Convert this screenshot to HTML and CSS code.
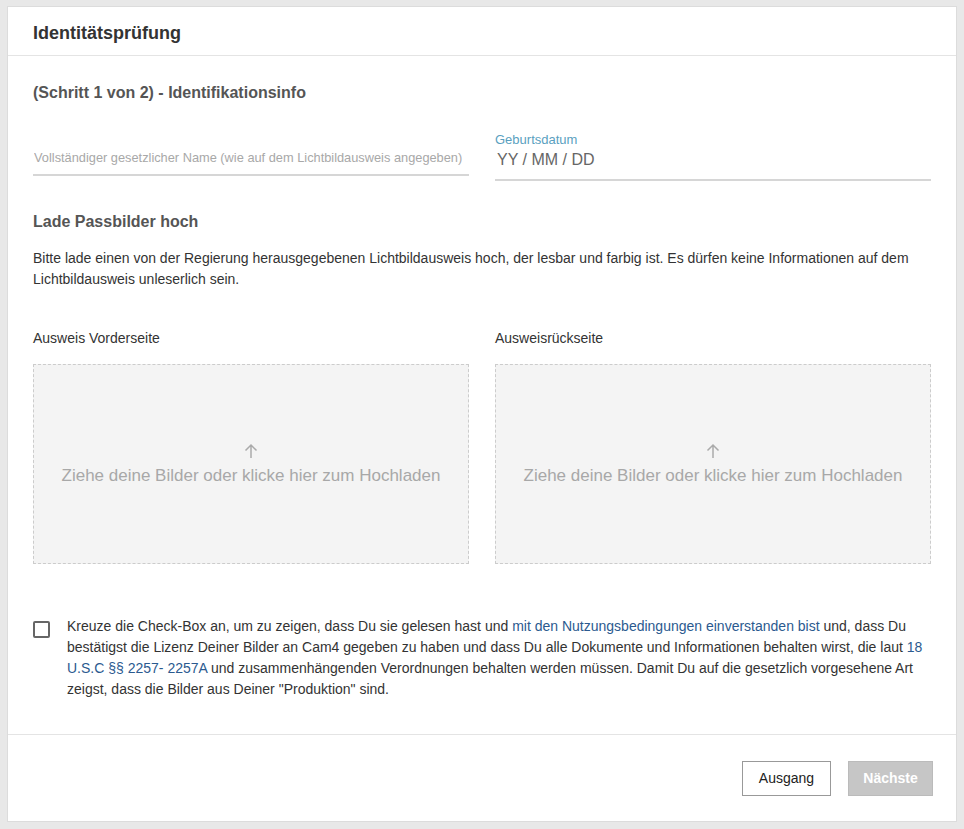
FILE: index.html
```html
<!DOCTYPE html>
<html lang="de">
<head>
    <meta charset="UTF-8">
    <meta name="viewport" content="width=device-width, initial-scale=1.0">
    <title>Identitätsprüfung</title>
    <link rel="stylesheet" href="styles.css">
</head>
<body>
    <div class="modal">
        <div class="modal-header">
            <h1>Identitätsprüfung</h1>
        </div>

        <div class="modal-body">
            <h2 class="step-title">(Schritt 1 von 2) - Identifikationsinfo</h2>

            <div class="field-row">
                <div class="field">
                    <input type="text" class="text-input name-input" placeholder="Vollständiger gesetzlicher Name (wie auf dem Lichtbildausweis angegeben)">
                </div>
                <div class="field">
                    <label class="field-label">Geburtsdatum</label>
                    <input type="text" class="text-input date-input" placeholder="YY / MM / DD">
                </div>
            </div>

            <h2 class="section-title">Lade Passbilder hoch</h2>
            <p class="intro">Bitte lade einen von der Regierung herausgegebenen Lichtbildausweis hoch, der lesbar und farbig ist. Es dürfen keine Informationen auf dem Lichtbildausweis unleserlich sein.</p>

            <div class="upload-row">
                <div class="upload">
                    <div class="upload-label">Ausweis Vorderseite</div>
                    <div class="dropzone">
                        <svg class="arrow" width="16" height="16" viewBox="0 0 16 16" fill="none" stroke="#aaa" stroke-width="1.5">
                            <path d="M8 15V2M2.5 7.5L8 2l5.5 5.5"/>
                        </svg>
                        <span>Ziehe deine Bilder oder klicke hier zum Hochladen</span>
                    </div>
                </div>
                <div class="upload">
                    <div class="upload-label">Ausweisrückseite</div>
                    <div class="dropzone">
                        <svg class="arrow" width="16" height="16" viewBox="0 0 16 16" fill="none" stroke="#aaa" stroke-width="1.5">
                            <path d="M8 15V2M2.5 7.5L8 2l5.5 5.5"/>
                        </svg>
                        <span>Ziehe deine Bilder oder klicke hier zum Hochladen</span>
                    </div>
                </div>
            </div>

            <label class="consent">
                <span class="checkbox"></span>
                <span class="consent-text">Kreuze die Check-Box an, um zu zeigen, dass Du sie gelesen hast und <a href="#">mit den Nutzungsbedingungen einverstanden bist</a> und, dass Du bestätigst die Lizenz Deiner Bilder an Cam4 gegeben zu haben und dass Du alle Dokumente und Informationen behalten wirst, die laut <a href="#">18 U.S.C §§ 2257- 2257A</a> und zusammenhängenden Verordnungen behalten werden müssen. Damit Du auf die gesetzlich vorgesehene Art zeigst, dass die Bilder aus Deiner "Produktion" sind.</span>
            </label>
        </div>

        <div class="modal-footer">
            <button class="btn btn-secondary">Ausgang</button>
            <button class="btn btn-primary" disabled>Nächste</button>
        </div>
    </div>
</body>
</html>
```

FILE: styles.css
```css
:root {
    --text-color: #333333;
    --muted-color: #555555;
    --placeholder-color: #a8a8a8;
    --line-color: #d6d6d6;
    --link-color: #2b5a8f;
    --label-color: #5a9fc0;
}

* {
    box-sizing: border-box;
}

body {
    margin: 0;
    padding: 6px 7px;
    background-color: #e8e8e8;
    font-family: "Liberation Sans", Arial, sans-serif;
    color: var(--text-color);
}

.modal {
    width: 950px;
    height: 816px;
    background-color: #ffffff;
    border: 1px solid #dcdcdc;
    display: flex;
    flex-direction: column;
}

.modal-header {
    height: 49px;
    padding: 0 25px;
    display: flex;
    align-items: center;
    border-bottom: 1px solid #e4e4e4;
}

.modal-header h1 {
    margin: 4px 0 0;
    font-size: 18px;
    font-weight: bold;
    color: #333;
}

.modal-body {
    flex: 1;
    padding: 28px 25px 0;
}

.step-title,
.section-title {
    margin: 0;
    font-size: 16px;
    line-height: 18px;
    font-weight: bold;
    color: var(--muted-color);
}

.field-row {
    display: grid;
    grid-template-columns: 1fr 1fr;
    align-items: start;
    gap: 26px;
    margin-top: 30px;
}

.field {
    display: flex;
    flex-direction: column;
}

.field-label {
    font-size: 13px;
    line-height: 15px;
    color: var(--label-color);
    margin-bottom: 1px;
}

.text-input {
    border: none;
    border-bottom: 2px solid var(--line-color);
    outline: none;
    padding: 0 0 0 1px;
    font-family: inherit;
    background: transparent;
}

.name-input {
    height: 44px;
    padding-top: 8px;
    font-size: 12.8px;
}

.date-input {
    height: 33px;
    padding-bottom: 8px;
    padding-left: 2px;
    font-size: 16px;
}

.text-input::placeholder {
    color: var(--placeholder-color);
}

.date-input::placeholder {
    color: #666;
}

.section-title {
    margin-top: 32px;
}

.intro {
    margin: 17px 0 0;
    font-size: 14px;
    line-height: 21px;
    color: var(--text-color);
}

.upload-row {
    display: grid;
    grid-template-columns: 1fr 1fr;
    gap: 26px;
    margin-top: 40px;
}

.upload-label {
    font-size: 14px;
    line-height: 16px;
    margin-bottom: 18px;
}

.dropzone {
    height: 200px;
    background-color: #f4f4f4;
    border: 1px dashed #cccccc;
    display: flex;
    flex-direction: column;
    align-items: center;
    justify-content: center;
    gap: 7px;
    color: var(--placeholder-color);
    font-size: 17px;
    line-height: 20px;
    cursor: pointer;
}

.arrow {
    display: block;
}

.consent {
    display: flex;
    gap: 17px;
    margin-top: 52px;
    cursor: pointer;
}

.checkbox {
    flex: none;
    width: 17px;
    height: 17px;
    border: 2px solid #666;
    border-radius: 2px;
    margin-top: 5px;
}

.consent-text {
    font-size: 14px;
    line-height: 21px;
    color: var(--text-color);
}

.consent-text a {
    color: var(--link-color);
    text-decoration: none;
}

.modal-footer {
    height: 87px;
    border-top: 1px solid #e4e4e4;
    display: flex;
    justify-content: flex-end;
    align-items: center;
    gap: 17px;
    padding: 0 23px 0 0;
}

.btn {
    height: 35px;
    padding: 0;
    font-family: inherit;
    font-size: 14px;
    cursor: pointer;
}

.btn-secondary {
    width: 89px;
    background-color: #fff;
    border: 1px solid #999;
    color: #222;
}

.btn-primary {
    width: 85px;
    background-color: #c6c6c6;
    border: 1px solid #bbb;
    color: #fff;
    font-weight: bold;
}

.btn-primary:disabled {
    cursor: not-allowed;
}
```
